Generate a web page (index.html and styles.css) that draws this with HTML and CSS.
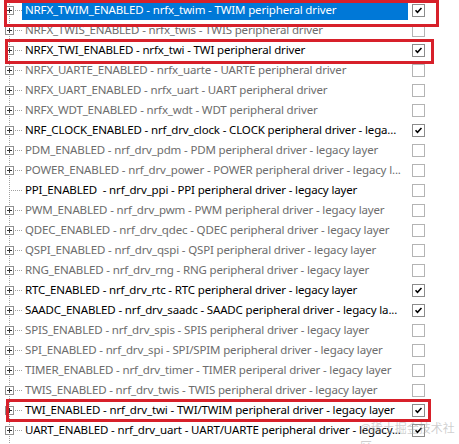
FILE: index.html
```html
<!DOCTYPE html>
<html lang="en">
<head>
    <meta charset="UTF-8">
    <meta name="viewport" content="width=device-width, initial-scale=1.0">
    <title>sdk_config - nRF_Drivers</title>
    <link rel="stylesheet" href="styles.css">
</head>
<body>
    <!-- Árvore de opções do sdk_config -->
    <div class="tree">
        <div class="row sel">
            <span class="twig"><span class="plus"></span></span>
            <span class="label">NRFX_TWIM_ENABLED - nrfx_twim - TWIM peripheral driver</span>
            <span class="box on"><svg viewBox="0 0 13 13"><path d="M3 6.3l2.3 2.4L10 3.6"/></svg></span>
        </div>
        <div class="row off">
            <span class="twig"><span class="plus"></span></span>
            <span class="label">NRFX_TWIS_ENABLED - nrfx_twis - TWIS peripheral driver</span>
            <span class="box"></span>
        </div>
        <div class="row">
            <span class="twig"><span class="plus"></span></span>
            <span class="label">NRFX_TWI_ENABLED - nrfx_twi - TWI peripheral driver</span>
            <span class="box on"><svg viewBox="0 0 13 13"><path d="M3 6.3l2.3 2.4L10 3.6"/></svg></span>
        </div>
        <div class="row off">
            <span class="twig"><span class="plus"></span></span>
            <span class="label">NRFX_UARTE_ENABLED - nrfx_uarte - UARTE peripheral driver</span>
            <span class="box"></span>
        </div>
        <div class="row off">
            <span class="twig"><span class="plus"></span></span>
            <span class="label">NRFX_UART_ENABLED - nrfx_uart - UART peripheral driver</span>
            <span class="box"></span>
        </div>
        <div class="row off">
            <span class="twig"><span class="plus"></span></span>
            <span class="label">NRFX_WDT_ENABLED - nrfx_wdt - WDT peripheral driver</span>
            <span class="box"></span>
        </div>
        <div class="row">
            <span class="twig"><span class="plus"></span></span>
            <span class="label">NRF_CLOCK_ENABLED - nrf_drv_clock - CLOCK peripheral driver - lega...</span>
            <span class="box on"><svg viewBox="0 0 13 13"><path d="M3 6.3l2.3 2.4L10 3.6"/></svg></span>
        </div>
        <div class="row off">
            <span class="twig"><span class="plus"></span></span>
            <span class="label">PDM_ENABLED - nrf_drv_pdm - PDM peripheral driver - legacy layer</span>
            <span class="box"></span>
        </div>
        <div class="row off">
            <span class="twig"><span class="plus"></span></span>
            <span class="label">POWER_ENABLED - nrf_drv_power - POWER peripheral driver - legacy l...</span>
            <span class="box"></span>
        </div>
        <div class="row">
            <span class="twig leaf"></span>
            <span class="label">PPI_ENABLED &nbsp;- nrf_drv_ppi - PPI peripheral driver - legacy layer</span>
            <span class="box"></span>
        </div>
        <div class="row off">
            <span class="twig"><span class="plus"></span></span>
            <span class="label">PWM_ENABLED - nrf_drv_pwm - PWM peripheral driver - legacy layer</span>
            <span class="box"></span>
        </div>
        <div class="row off">
            <span class="twig"><span class="plus"></span></span>
            <span class="label">QDEC_ENABLED - nrf_drv_qdec - QDEC peripheral driver - legacy layer</span>
            <span class="box"></span>
        </div>
        <div class="row off">
            <span class="twig"><span class="plus"></span></span>
            <span class="label">QSPI_ENABLED - nrf_drv_qspi - QSPI peripheral driver - legacy layer</span>
            <span class="box"></span>
        </div>
        <div class="row off">
            <span class="twig"><span class="plus"></span></span>
            <span class="label">RNG_ENABLED - nrf_drv_rng - RNG peripheral driver - legacy layer</span>
            <span class="box"></span>
        </div>
        <div class="row">
            <span class="twig"><span class="plus"></span></span>
            <span class="label">RTC_ENABLED - nrf_drv_rtc - RTC peripheral driver - legacy layer</span>
            <span class="box on"><svg viewBox="0 0 13 13"><path d="M3 6.3l2.3 2.4L10 3.6"/></svg></span>
        </div>
        <div class="row">
            <span class="twig"><span class="plus"></span></span>
            <span class="label">SAADC_ENABLED - nrf_drv_saadc - SAADC peripheral driver - legacy la...</span>
            <span class="box on"><svg viewBox="0 0 13 13"><path d="M3 6.3l2.3 2.4L10 3.6"/></svg></span>
        </div>
        <div class="row off">
            <span class="twig"><span class="plus"></span></span>
            <span class="label">SPIS_ENABLED - nrf_drv_spis - SPIS peripheral driver - legacy layer</span>
            <span class="box"></span>
        </div>
        <div class="row off">
            <span class="twig"><span class="plus"></span></span>
            <span class="label">SPI_ENABLED - nrf_drv_spi - SPI/SPIM peripheral driver - legacy layer</span>
            <span class="box"></span>
        </div>
        <div class="row off">
            <span class="twig"><span class="plus"></span></span>
            <span class="label">TIMER_ENABLED - nrf_drv_timer - TIMER periperal driver - legacy layer</span>
            <span class="box"></span>
        </div>
        <div class="row off">
            <span class="twig"><span class="plus"></span></span>
            <span class="label">TWIS_ENABLED - nrf_drv_twis - TWIS peripheral driver - legacy layer</span>
            <span class="box"></span>
        </div>
        <div class="row">
            <span class="twig"><span class="plus"></span></span>
            <span class="label">TWI_ENABLED - nrf_drv_twi - TWI/TWIM peripheral driver - legacy layer</span>
            <span class="box on"><svg viewBox="0 0 13 13"><path d="M3 6.3l2.3 2.4L10 3.6"/></svg></span>
        </div>
        <div class="row">
            <span class="twig"><span class="plus"></span></span>
            <span class="label">UART_ENABLED - nrf_drv_uart - UART/UARTE peripheral driver - legacy...</span>
            <span class="box on"><svg viewBox="0 0 13 13"><path d="M3 6.3l2.3 2.4L10 3.6"/></svg></span>
        </div>
        <div class="row off">
            <span class="twig"><span class="plus"></span></span>
            <span class="label"></span>
            <span class="box"></span>
        </div>

        <!-- marcações em vermelho -->
        <div class="mark mark-1"></div>
        <div class="mark mark-2"></div>
        <div class="mark mark-3"></div>

        <div class="watermark">@稀土掘金技术社区</div>
    </div>
</body>
</html>
```

FILE: styles.css
```css
html, body {
    margin: 0;
    height: 100%;
    overflow: hidden;
    background: #fff;
}

body {
    font-family: 'Noto Sans', 'Open Sans', sans-serif;
    font-size: 11.5px;
    letter-spacing: -0.15px;
    color: #000;
}

.tree {
    position: relative;
}

.row {
    display: flex;
    align-items: center;
    height: 20px;
}

.twig {
    flex: none;
    width: 22px;
    height: 20px;
    display: flex;
    align-items: center;
    padding-left: 5px;
    box-sizing: border-box;
    background:
        repeating-linear-gradient(to bottom, #a0a0a0 0 1px, transparent 1px 2px) 9px 0 / 1px 100% no-repeat,
        repeating-linear-gradient(to right, #a0a0a0 0 1px, transparent 1px 2px) 9px 10px / 13px 1px no-repeat;
}

.plus {
    width: 9px;
    height: 9px;
    box-sizing: border-box;
    border: 1px solid #919191;
    background:
        linear-gradient(#333, #333) center / 5px 1px no-repeat,
        linear-gradient(#333, #333) center / 1px 5px no-repeat,
        #fff;
}

.label {
    flex: none;
    width: 386px;
    height: 20px;
    line-height: 20px;
    padding-left: 3px;
    box-sizing: border-box;
    white-space: nowrap;
    overflow: hidden;
}

.off .label {
    color: #6d6d6d;
}

.sel .label {
    background-color: #0078d7;
    color: #fff;
}

.box {
    flex: none;
    width: 13px;
    height: 13px;
    margin-left: 4px;
    box-sizing: border-box;
    border: 1px solid #b4b4b4;
    background: #fff;
}

.box.on {
    border-color: #8c8c8c;
}

.box svg {
    display: block;
    width: 11px;
    height: 11px;
}

.box path {
    fill: none;
    stroke: #000;
    stroke-width: 1.8;
}

.mark {
    position: absolute;
    border: 3px solid #d7202a;
    box-sizing: border-box;
}

.mark-1 {
    left: 4px;
    top: 0;
    width: 435px;
    height: 27px;
}

.mark-2 {
    left: 5px;
    top: 39px;
    width: 429px;
    height: 25px;
}

.mark-3 {
    left: 6px;
    top: 399px;
    width: 425px;
    height: 23px;
}

.watermark {
    position: absolute;
    left: 360px;
    top: 419px;
    font-family: 'Noto Sans', 'Noto Sans CJK SC', sans-serif;
    font-size: 12px;
    letter-spacing: 0;
    color: rgba(160, 160, 160, 0.5);
}
```
